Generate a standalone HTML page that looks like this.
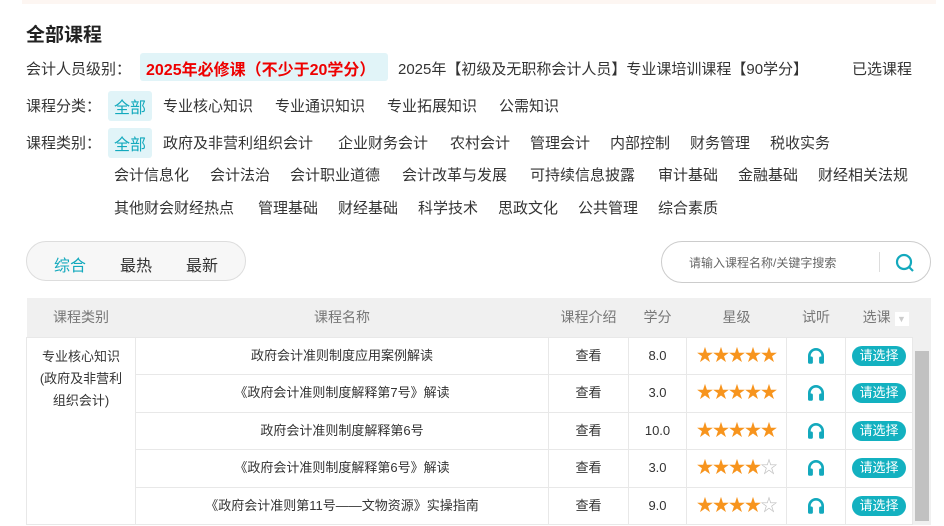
<!DOCTYPE html>
<html><head><meta charset="utf-8"><style>
*{margin:0;padding:0;box-sizing:border-box}
body{width:944px;height:526px;overflow:hidden;background:#fff;font-family:"Liberation Sans","Noto Sans CJK SC",sans-serif;color:#333;position:relative}
.a{position:absolute;white-space:nowrap}
.top{left:22px;top:0;width:914px;height:4px;background:#fdf6f2}
h1{position:absolute;left:26px;top:20px;font-size:19px;font-weight:bold;color:#222}
.row{position:absolute;left:26px;font-size:15px;color:#333;white-space:nowrap}
.row span{position:absolute;white-space:nowrap}
.sel{background:#e1f4f8;color:#13a9bd;border-radius:3px;padding:3px 6px}
.pill{left:26px;top:241px;width:220px;height:40px;border:1px solid #ddd;border-radius:20px;background:#f7f7f7}
.search{left:661px;top:241px;width:270px;height:42px;border:1px solid #ccc;border-radius:21px}
table{position:absolute;left:26px;top:298px;border-collapse:collapse;font-size:13px;color:#333}
th{background:#f0f0f0;color:#777;font-weight:normal;height:39px;font-size:14px}
td{border:1px solid #e8e8e8;padding:0;text-align:center;line-height:16px}
.c{height:36.5px;display:flex;align-items:center;justify-content:center;overflow:hidden}
.st{color:#f7941d;font-size:17px;letter-spacing:-1px}
.st i{color:#bbb;font-style:normal}
.btn{display:inline-block;background:#13b1c0;color:#fff;border-radius:10px;padding:1px 7px;font-size:13px;line-height:18px}
</style></head><body>
<div class="a top"></div>
<h1>全部课程</h1>
<div class="row" style="top:58px">会计人员级别：
<span style="left:114px;top:-5px;width:248px;height:28px;background:#e1f4f8;border-radius:3px"></span>
<span style="left:120px;top:-2px;color:#e00;font-weight:bold;font-size:16px">2025年必修课（不少于20学分）</span>
<span style="left:372px;top:0">2025年【初级及无职称会计人员】专业课培训课程【90学分】</span>
<span style="left:826px;top:0">已选课程</span></div>
<div class="row" style="top:95px">课程分类：
<span class="sel" style="left:82px;top:-4px;font-size:16px">全部</span>
<span style="left:137px;top:0">专业核心知识</span><span style="left:249px;top:0">专业通识知识</span><span style="left:361px;top:0">专业拓展知识</span><span style="left:473px;top:0">公需知识</span></div>
<div class="row" style="top:132px">课程类别：
<span class="sel" style="left:82px;top:-4px;font-size:16px">全部</span>
<span style="left:137px;top:0">政府及非营利组织会计</span><span style="left:312px;top:0">企业财务会计</span><span style="left:424px;top:0">农村会计</span><span style="left:504px;top:0">管理会计</span><span style="left:584px;top:0">内部控制</span><span style="left:664px;top:0">财务管理</span><span style="left:744px;top:0">税收实务</span>
<span style="left:88px;top:32px">会计信息化</span><span style="left:184px;top:32px">会计法治</span><span style="left:264px;top:32px">会计职业道德</span><span style="left:376px;top:32px">会计改革与发展</span><span style="left:504px;top:32px">可持续信息披露</span><span style="left:632px;top:32px">审计基础</span><span style="left:712px;top:32px">金融基础</span><span style="left:792px;top:32px">财经相关法规</span>
<span style="left:88px;top:65px">其他财会财经热点</span><span style="left:232px;top:65px">管理基础</span><span style="left:312px;top:65px">财经基础</span><span style="left:392px;top:65px">科学技术</span><span style="left:472px;top:65px">思政文化</span><span style="left:552px;top:65px">公共管理</span><span style="left:632px;top:65px">综合素质</span></div>
<div class="a pill"></div>
<div class="a" style="left:54px;top:252px;font-size:16px;color:#13a9bd">综合</div>
<div class="a" style="left:120px;top:252px;font-size:16px">最热</div>
<div class="a" style="left:186px;top:252px;font-size:16px">最新</div>
<div class="a search"></div>
<div class="a" style="left:689px;top:254px;font-size:12px;color:#666">请输入课程名称/关键字搜索</div>
<div class="a" style="left:879px;top:252px;width:1px;height:20px;background:#ddd"></div>
<svg class="a" style="left:895px;top:253px" width="20" height="20" viewBox="0 0 20 20"><circle cx="9" cy="9" r="7" fill="none" stroke="#13a9bd" stroke-width="2.2"/><line x1="14" y1="14" x2="18" y2="18" stroke="#13a9bd" stroke-width="2.2"/></svg>
<table>
<tr><th style="width:109px">课程类别</th><th style="width:413px">课程名称</th><th style="width:80px">课程介绍</th><th style="width:58px">学分</th><th style="width:100px">星级</th><th style="width:59px">试听</th><th style="width:67px;text-align:right;padding-right:4px">选课 <span style="display:inline-block;width:14px;height:14px;background:#fff;color:#ccc;font-size:9px;line-height:14px;text-align:center;vertical-align:middle">▼</span></th><th style="width:18px"></th></tr>
<tr><td rowspan="5" class="x" style="vertical-align:top;padding-top:8px;line-height:22px">专业核心知识<br>(政府及非营利<br>组织会计)</td><td>政府会计准则制度应用案例解读</td><td>查看</td><td>8.0</td><td class="st">★★★★★</td><td>H</td><td><span class="btn">请选择</span></td><td rowspan="5" class="x" style="background:#f0f0f0;border:none;vertical-align:top;padding-top:14px"><div style="width:14px;height:170px;background:#c1c1c1;margin:0 auto"></div></td></tr>
<tr><td>《政府会计准则制度解释第7号》解读</td><td>查看</td><td>3.0</td><td class="st">★★★★★</td><td>H</td><td><span class="btn">请选择</span></td></tr>
<tr><td>政府会计准则制度解释第6号</td><td>查看</td><td>10.0</td><td class="st">★★★★★</td><td>H</td><td><span class="btn">请选择</span></td></tr>
<tr><td>《政府会计准则制度解释第6号》解读</td><td>查看</td><td>3.0</td><td class="st">★★★★<i>☆</i></td><td>H</td><td><span class="btn">请选择</span></td></tr>
<tr><td>《政府会计准则第11号——文物资源》实操指南</td><td>查看</td><td>9.0</td><td class="st">★★★★<i>☆</i></td><td>H</td><td><span class="btn">请选择</span></td></tr>
</table>
<script>
document.querySelectorAll('td').forEach(function(t){
if(t.classList.contains('x'))return;
if(t.textContent==='H'){t.innerHTML='<svg width="20" height="20" viewBox="0 0 18 18"><path d="M3 12V9a6 6 0 0 1 12 0v3" fill="none" stroke="#13a9bd" stroke-width="2.4"/><rect x="1.8" y="9.5" width="4.4" height="6.5" rx="1.5" fill="#13a9bd"/><rect x="11.8" y="9.5" width="4.4" height="6.5" rx="1.5" fill="#13a9bd"/></svg>';}
t.innerHTML='<div class="c">'+t.innerHTML+'</div>';});
</script>
</body></html>
